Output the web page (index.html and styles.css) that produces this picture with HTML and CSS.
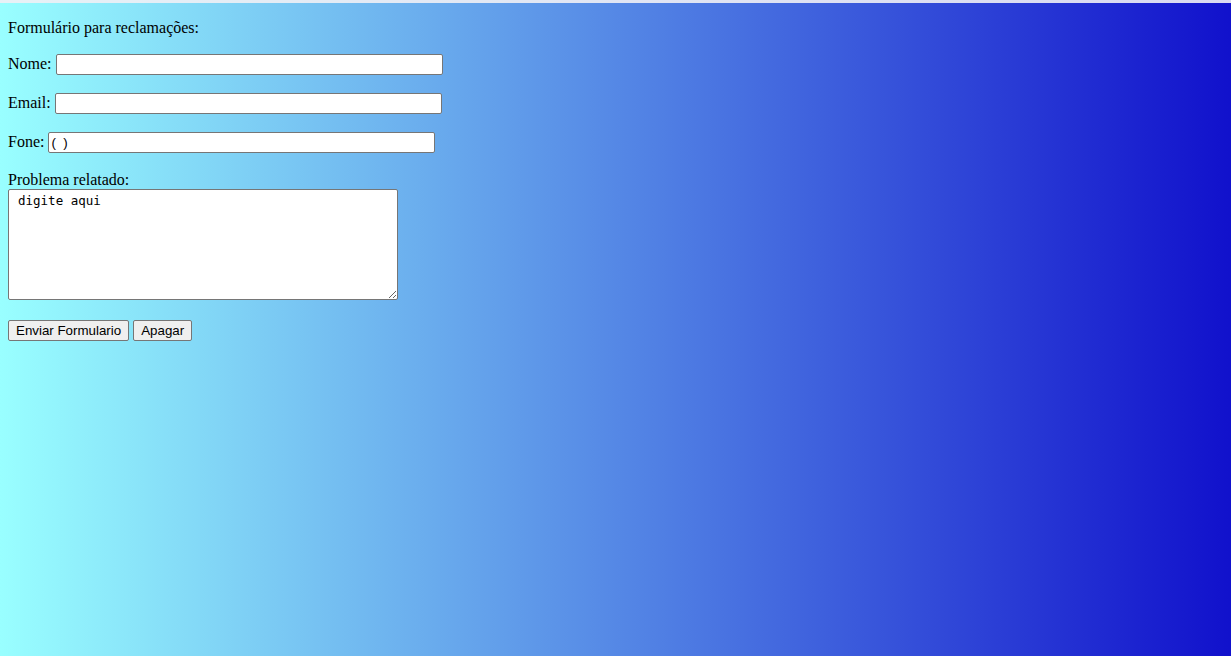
FILE: index.html
```html
<!DOCTYPE html>
<html lang="pt">
<head>
<meta charset="utf-8">
<title>Reclamações</title>
<link rel="stylesheet" href="styles.css">
</head>
<body>
<form class="form">
  <p class="row">Formulário para reclamações:</p>
  <p class="row">Nome: <input class="field" type="text"></p>
  <p class="row">Email: <input class="field" type="text"></p>
  <p class="row">Fone: <input class="field" type="text" value="(  )"></p>
  <p class="row row-problem">Problema relatado:<br><textarea class="area">digite aqui</textarea></p>
  <p class="row"><button class="btn" type="button">Enviar Formulario</button> <button class="btn" type="button">Apagar</button></p>
</form>
</body>
</html>
```
FILE: styles.css
```css
html {
  min-height: 100%;
  box-sizing: border-box;
  border-top: 3px solid rgba(240, 240, 245, 0.9);
  background: linear-gradient(to right, #99ffff, #1111cc);
}
body {
  margin: 0;
  padding: 0 8px;
  font-family: "Liberation Serif", "Times New Roman", serif;
  font-size: 16px;
  color: #000;
}
.form {
  margin: 0;
  padding: 16px 0 0;
}
.row {
  margin: 0 0 16px;
}
.row-problem {
  padding-top: 1px;
}
.field {
  box-sizing: border-box;
  width: 387px;
  height: 21px;
  border: 1px solid #767676;
  border-radius: 2px;
  background: #fff;
  font-family: "Liberation Sans", Arial, sans-serif;
  font-size: 13.33px;
  padding: 1px 2px;
  margin: 1px 0;
  vertical-align: baseline;
}
.area {
  box-sizing: border-box;
  width: 390px;
  height: 111px;
  border: 1px solid #767676;
  border-radius: 2px;
  background: #fff;
  font-family: "DejaVu Sans Mono", "Liberation Mono", monospace;
  font-size: 12.5px;
  padding: 3px 9px 2px;
  margin: 0;
  resize: both;
}
.btn {
  box-sizing: border-box;
  height: 21px;
  padding: 1px 7px;
  border: 1px solid #767676;
  border-radius: 2px;
  background: #efefef;
  font-family: "Liberation Sans", Arial, sans-serif;
  font-size: 13.33px;
  color: #000;
  margin: 0;
}
```
